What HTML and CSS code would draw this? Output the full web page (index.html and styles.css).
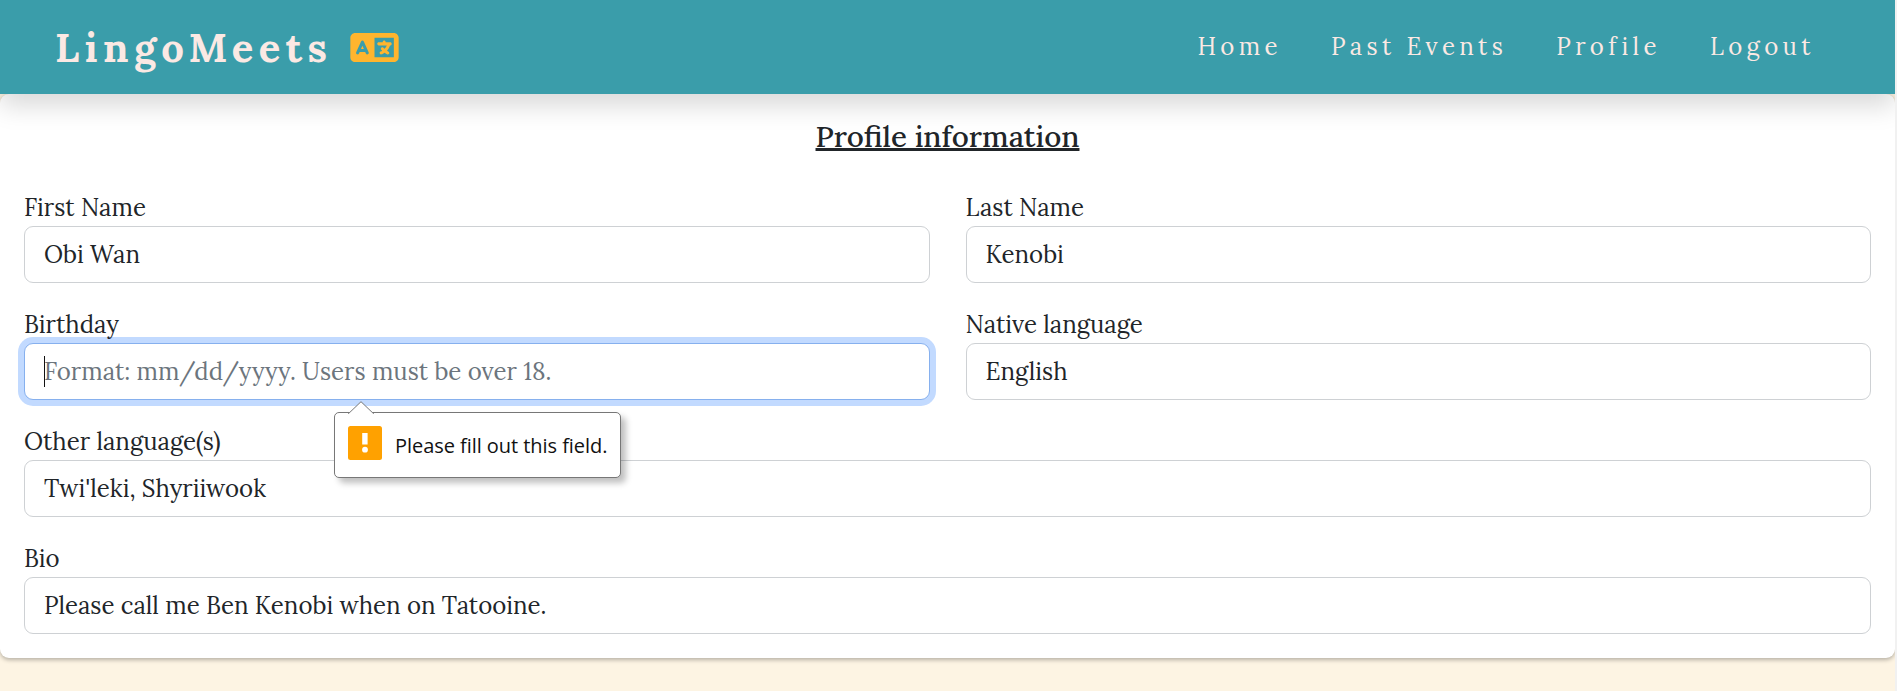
FILE: index.html
```html
<!DOCTYPE html>
<html lang="en">
<head>
<meta charset="utf-8">
<title>LingoMeets</title>
<link rel="stylesheet" href="styles.css">
</head>
<body>
<div class="page">
  <header class="navbar">
    <div class="brand">
      <span class="brand-name">LingoMeets</span>
      <svg class="brand-icon" viewBox="0 64 640 384" aria-hidden="true"><path d="M0 128C0 92.7 28.7 64 64 64H256h48 16H576c35.3 0 64 28.7 64 64V384c0 35.3-28.7 64-64 64H320 304 256 64c-35.3 0-64-28.7-64-64V128zm320 0V384H576V128H320zM178.3 175.9c-3.2-7.2-10.4-11.9-18.3-11.9s-15.1 4.7-18.3 11.9l-64 144c-4.5 10.1 .1 21.9 10.2 26.4s21.9-.1 26.4-10.2l8.9-20.1h73.6l8.9 20.1c4.5 10.1 16.3 14.6 26.4 10.2s14.6-16.3 10.2-26.4l-64-144zM160 233.2L179 276H141l19-42.8zM448 164c11 0 20 9 20 20v4h44 16c11 0 20 9 20 20s-9 20-20 20h-2l-1.6 4.5c-8.9 24.4-22.4 46.6-39.6 65.4c.9 .6 1.8 1.1 2.7 1.6l18.9 11.3c9.5 5.7 12.5 18 6.9 27.4s-18 12.5-27.4 6.9l-18.9-11.3c-4.5-2.7-8.8-5.5-13.1-8.5c-10.6 7.5-21.9 14-34 19.4l-3.6 1.6c-10.1 4.5-21.9-.1-26.4-10.2s.1-21.9 10.2-26.4l3.6-1.6c6.4-2.9 12.6-6.1 18.5-9.8l-12.2-12.2c-7.8-7.8-7.8-20.5 0-28.3s20.5-7.8 28.3 0l14.6 14.6 .5 .5c12.4-13.1 22.5-28.3 29.8-45H448 376c-11 0-20-9-20-20s9-20 20-20h52v-4c0-11 9-20 20-20z"/></svg>
    </div>
    <nav class="links">
      <a class="link">Home</a>
      <a class="link">Past Events</a>
      <a class="link">Profile</a>
      <a class="link">Logout</a>
    </nav>
  </header>
  <main class="card">
    <h1 class="title">Profile information</h1>
    <form class="form">
      <div class="field">
        <label class="label" for="first">First Name</label>
        <input class="input" id="first" value="Obi Wan">
      </div>
      <div class="field">
        <label class="label" for="last">Last Name</label>
        <input class="input" id="last" value="Kenobi">
      </div>
      <div class="field">
        <label class="label birthday" for="birthday">Birthday</label>
        <input class="input active" id="birthday" placeholder="Format: mm/dd/yyyy. Users must be over 18.">
        <span class="caret"></span>
        <div class="tooltip">
          <svg class="tooltip-arrow" viewBox="0 0 26 13" aria-hidden="true"><path d="M0 13 L1 12 L13 .7 L25 12 L26 13Z" fill="#fff"/><path d="M0 12.4 Q1 12.4 2 11.2 L13 .7 L24 11.2 Q25 12.4 26 12.4" fill="none" stroke="#777"/></svg>
          <svg class="tooltip-icon" viewBox="0 0 34 34" aria-hidden="true"><rect width="34" height="34" rx="2.5" fill="#ffa100"/><rect x="14.2" y="7" width="5.4" height="11.5" fill="#fff"/><circle cx="17" cy="23.7" r="2.9" fill="#fff"/></svg>
          <span class="tooltip-text">Please fill out this field.</span>
        </div>
      </div>
      <div class="field">
        <label class="label" for="native">Native language</label>
        <input class="input" id="native" value="English">
      </div>
      <div class="field wide">
        <label class="label" for="other">Other language(s)</label>
        <input class="input" id="other" value="Twi'leki, Shyriiwook">
      </div>
      <div class="field wide">
        <label class="label" for="bio">Bio</label>
        <input class="input" id="bio" value="Please call me Ben Kenobi when on Tatooine.">
      </div>
    </form>
  </main>
</div>
</body>
</html>
```
FILE: styles.css
```css
* { box-sizing: border-box; }

body {
  margin: 0;
  height: 691px;
  overflow: hidden;
  background: #f1f1f1;
  color: #212529;
  font-family: Lora, "Liberation Serif", serif;
}

.page {
  width: 1895px;
  height: 691px;
  overflow: hidden;
  background: #fdf4e3;
}

.navbar {
  position: relative;
  z-index: 1;
  display: flex;
  align-items: center;
  justify-content: space-between;
  height: 94px;
  padding: 0 80px 0 55px;
  background: #3a9daa;
  box-shadow: 0 12px 24px rgba(0, 0, 0, .15);
}

.brand { display: flex; align-items: center; }

.brand-name {
  width: 295px;
  padding-top: 1px;
  color: #fbe9e4;
  font-size: 40px;
  font-weight: 700;
  letter-spacing: 5.4px;
  white-space: nowrap;
}

.brand-icon { width: 49px; height: 29px; fill: #ffb52e; }

.links { display: flex; gap: 49px; }

.link {
  color: #fbe9e4;
  font-size: 24px;
  line-height: 36px;
  letter-spacing: 4.4px;
  white-space: nowrap;
}

.card {
  height: 564px;
  padding: 22px 24px 24px;
  border-radius: 9px;
  background: #fff;
  box-shadow: 0 2px 4px rgba(0, 0, 0, .28);
}

.title {
  margin: 0 0 33px;
  font-size: 29.5px;
  font-weight: 500;
  line-height: 41px;
  text-align: center;
  text-decoration: underline;
  text-decoration-thickness: 3px;
  text-underline-offset: 1px;
}

.form {
  display: grid;
  grid-template-columns: 1fr 1fr;
  gap: 24px 36px;
}

.field { position: relative; display: flex; flex-direction: column; }
.wide { grid-column: 1 / -1; }

.label {
  height: 36px;
  font-size: 24px;
  line-height: 36px;
}

.birthday { position: relative; z-index: 1; }

.input {
  width: 100%;
  height: 57px;
  padding: 0 19px;
  border: 1px solid #ced1d4;
  border-radius: 9px;
  outline: 0;
  background: #fff;
  color: #212529;
  font: 24px/36px Lora, "Liberation Serif", serif;
}

.active {
  border-color: #86b0ee;
  box-shadow: 0 0 0 6px #c2daff;
}

.active::placeholder { color: #6c757d; opacity: 1; }

.caret {
  position: absolute;
  top: 49px;
  left: 20px;
  width: 1px;
  height: 31px;
  background: #111;
}

.tooltip {
  position: absolute;
  z-index: 2;
  top: 105px;
  left: 310px;
  display: flex;
  gap: 13px;
  width: 287px;
  height: 66px;
  padding: 13px;
  border: 1px solid #777;
  border-radius: 5px;
  background: #fff;
  box-shadow: 5px 5px 6px rgba(0, 0, 0, .25);
}

.tooltip-arrow {
  position: absolute;
  top: -12px;
  left: 13px;
  width: 26px;
  height: 13px;
}

.tooltip-icon { flex: none; width: 34px; height: 34px; }

.tooltip-text {
  color: #111;
  font: 20px/40px "Open Sans", sans-serif;
  letter-spacing: -.05px;
  white-space: nowrap;
}
```
